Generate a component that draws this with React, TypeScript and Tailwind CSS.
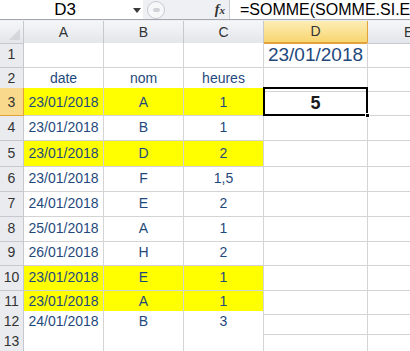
const rows: { h: string; cells: string[]; yellow?: boolean }[] = [
  { h: "h-[25px]", cells: ["", "", ""] },
  { h: "h-[20px]", cells: ["date", "nom", "heures"] },
  { h: "h-[28px]", cells: ["23/01/2018", "A", "1"], yellow: true },
  { h: "h-[25px]", cells: ["23/01/2018", "B", "1"] },
  { h: "h-[26px]", cells: ["23/01/2018", "D", "2"], yellow: true },
  { h: "h-[25px]", cells: ["23/01/2018", "F", "1,5"] },
  { h: "h-[25px]", cells: ["24/01/2018", "E", "2"] },
  { h: "h-[25px]", cells: ["25/01/2018", "A", "1"] },
  { h: "h-[24px]", cells: ["26/01/2018", "H", "2"] },
  { h: "h-[25px]", cells: ["23/01/2018", "E", "1"], yellow: true },
  { h: "h-[20px]", cells: ["23/01/2018", "A", "1"], yellow: true },
  { h: "h-[20px]", cells: ["24/01/2018", "B", "3"] },
  { h: "h-[20px]", cells: ["", "", ""] },
];

function FormulaBar() {
  return (
    <div className="flex h-[20px] border-b border-[#a3a7ad]">
      <div className="relative flex w-[143px] items-center bg-white">
        <span className="w-[130px] text-center text-[17px] leading-none text-black">D3</span>
        <svg className="absolute left-[133px] top-[8px]" width="8" height="5" viewBox="0 0 8 5">
          <path d="M0 0h8L4 5z" fill="#3a3a3a" />
        </svg>
      </div>
      <div className="flex w-[86px] items-center bg-[#eef0f3]">
        <div className="ml-[4px] h-[18px] w-[18px] rounded-full border border-[#c7cbd1] bg-[#f6f7f9]">
          <div className="mx-auto mt-[6px] h-[4px] w-[7px] rounded-full bg-[#cfd3d8]" />
        </div>
        <span className="ml-auto mr-[4px] font-['Liberation_Serif'] text-[14px] font-bold italic leading-none text-[#333]">
          f<span className="text-[11px]">x</span>
        </span>
      </div>
      <div className="flex flex-1 items-center overflow-hidden whitespace-nowrap border-l border-[#c9cdd2] bg-white pl-[10px]">
        <span className="text-[16px] leading-none text-black">=SOMME(SOMME.SI.ENS(</span>
      </div>
    </div>
  );
}

function ColHeaders() {
  const normal =
    "flex items-center justify-center border-r border-b border-[#c5c9cf] bg-gradient-to-b from-[#f5f6f8] to-[#e3e6ea] text-[14px] text-[#333]";
  return (
    <div className="grid h-[22px] grid-cols-[24px_80px_80px_80px_104px_1fr]">
      <div className="relative border-r border-b border-[#c5c9cf] bg-gradient-to-b from-[#f5f6f8] to-[#e3e6ea]">
        <svg className="absolute bottom-[3px] right-[3px]" width="11" height="11" viewBox="0 0 11 11">
          <path d="M11 0V11H0z" fill="#d3d6da" />
        </svg>
      </div>
      <div className={normal}>A</div>
      <div className={normal}>B</div>
      <div className={normal}>C</div>
      <div className="flex items-center justify-center border-r border-b-2 border-[#e2a33c] bg-gradient-to-b from-[#fdedb4] to-[#f8d56f] text-[14px] text-[#333]">
        D
      </div>
      <div className="flex items-center justify-start border-b border-[#c5c9cf] bg-gradient-to-b from-[#f5f6f8] to-[#e3e6ea] pl-[36px] text-[14px] text-[#333]">
        E
      </div>
    </div>
  );
}

export default function App() {
  return (
    <div className="h-[351px] w-[410px] overflow-hidden bg-white font-['Liberation_Sans',sans-serif]">
      <FormulaBar />
      <div className="h-[1px] bg-[#eceef1]" />
      <ColHeaders />
      {rows.map((r, i) => {
        const n = i + 1;
        const sel = n === 3;
        const fill = r.yellow ? "bg-[#ffff00]" : "bg-white";
        return (
          <div key={n} className={`grid grid-cols-[24px_80px_80px_80px_104px_1fr] ${r.h}`}>
            <div
              className={
                sel
                  ? "flex items-end justify-center border-r border-b border-[#e2a33c] bg-[#f9d98c] pb-[2px] text-[14px] text-[#333]"
                  : "flex items-end justify-center border-r border-b border-[#c5c9cf] bg-[#e9ebee] pb-[2px] text-[14px] text-[#333]"
              }
            >
              {n}
            </div>
            {r.cells.map((c, j) => (
              <div
                key={j}
                className={`flex items-end justify-center border-r border-b border-[#d4d4d4] pb-[2px] text-[14px] text-[#1f497d] ${fill}`}
              >
                {c}
              </div>
            ))}
            {n === 1 ? (
              <div className="flex items-end justify-center border-r border-b border-[#d4d4d4] pb-[1px] text-[19px] leading-none text-[#1f497d]">
                <span className="mb-[2px]">23/01/2018</span>
              </div>
            ) : sel ? (
              <div className="relative flex items-end justify-center border-r border-b border-[#d4d4d4] pb-[3px] text-[18px] font-bold leading-none text-[#1a1a1a]">
                5
                <div className="absolute -left-[1px] -top-[1px] h-[29px] w-[105px] border-2 border-black" />
                <div className="absolute -bottom-[3px] -right-[3px] h-[5px] w-[5px] border border-white bg-black" />
              </div>
            ) : (
              <div className="border-r border-b border-[#d4d4d4]" />
            )}
            <div className="border-b border-[#d4d4d4]" />
          </div>
        );
      })}
    </div>
  );
}
